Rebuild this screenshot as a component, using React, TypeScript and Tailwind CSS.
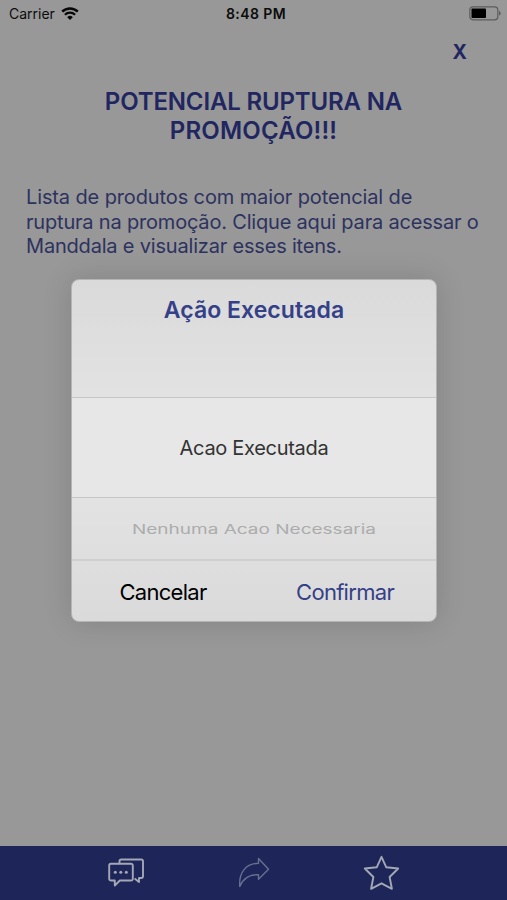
import React, { useState } from "react";

const WifiIcon = () => (
  <svg width="18" height="14" viewBox="0 0 18 14" fill="none">
    <path d="M1.2 4.7a11 11 0 0 1 15.6 0" stroke="#080808" strokeWidth="2.5" />
    <path d="M3.9 7.7a7.200 7.200 0 0 1 10.200 0" stroke="#080808" strokeWidth="2.200" />
    <path d="M9 13 6.200 10.200a4 4 0 0 1 5.600 0Z" fill="#080808" />
  </svg>
);

const BatteryIcon = () => (
  <svg width="33" height="15" viewBox="0 0 33 15" fill="none">
    <rect x="0.8" y="0.8" width="28" height="13" rx="3" stroke="#5c5c5c" strokeWidth="1.2" />
    <rect x="2.500" y="2.500" width="14.500" height="9.600" rx="0.8" fill="#000" />
    <path d="M30 5v4.600c1-.4 1.700-1.200 1.700-2.300S31 5.400 30 5Z" fill="#5c5c5c" />
  </svg>
);

const ChatIcon = () => (
  <svg width="37" height="30" viewBox="0 0 37 30" fill="none" stroke="#a3a8b5" strokeWidth="1.900" strokeLinejoin="round">
    <path d="M11.500 5.200V3.200a1.700 1.700 0 0 1 1.700-1.700H33.300a1.700 1.700 0 0 1 1.700 1.700V18.300a1.700 1.700 0 0 1-1.700 1.700H31v4l-4.400-3.400" />
    <path d="M3 5.700H23a1.800 1.800 0 0 1 1.800 1.800V20.700a1.800 1.800 0 0 1-1.800 1.800H11.800L6.800 27.600V22.500H3a1.800 1.800 0 0 1-1.800-1.800V7.500A1.800 1.800 0 0 1 3 5.700Z" />
    <g fill="#a3a8b5" stroke="none">
      <circle cx="7.300" cy="14.200" r="1.500" />
      <circle cx="12.800" cy="14.200" r="1.500" />
      <circle cx="18.300" cy="14.200" r="1.500" />
    </g>
  </svg>
);

const ShareIcon = () => (
  <svg width="32" height="32" viewBox="0 0 32 32" fill="none" stroke="#687091" strokeWidth="1.400" strokeLinejoin="round">
    <path d="M20.500 1.500 30.500 12.200 20.500 22.300V17.800C12 17.200 5 21.500 1.800 29.500C.6 16 7.500 6.300 20.500 6.300Z" />
  </svg>
);

const StarIcon = () => (
  <svg width="37" height="36" viewBox="0 0 37 36" fill="none" stroke="#a3a8b5" strokeWidth="1.900" strokeLinejoin="round">
    <path d="M18.500 1.800 23.300 12.300 35.200 13.500 26.600 22 28.900 33.800 18.500 28.300 8.100 33.800 10.400 22 1.800 13.500 13.700 12.300Z" />
  </svg>
);

const StatusBar = () => (
  <header className="grid h-[27px] grid-cols-3 items-center pl-[9px] pr-[5px] text-[14px] leading-[27px] text-[#0c0c0c]">
    <div className="flex items-center gap-[6px]">
      <span>Carrier</span>
      <WifiIcon />
    </div>
    <span className="pl-px text-center font-semibold tracking-[0.4px]">8:48 PM</span>
    <div className="flex justify-end">
      <BatteryIcon />
    </div>
  </header>
);

const TabBar = () => (
  <footer className="flex h-[54px] shrink-0 items-center justify-between bg-[#1e2559] pl-[108px] pr-[107px]">
    <button>
      <ChatIcon />
    </button>
    <button>
      <ShareIcon />
    </button>
    <button>
      <StarIcon />
    </button>
  </footer>
);

interface ActionModalProps {
  onClose: () => void;
}

const ActionModal = ({ onClose }: ActionModalProps) => (
  <div className="absolute left-[71px] top-[279px] flex h-[343px] w-[366px] flex-col overflow-hidden rounded-[8px] border border-[#b4b4b4] bg-linear-to-b from-[#dadada] via-[#e6e6e6] to-[#dadada] text-center shadow-[0_0_30px_rgba(0,0,0,0.14)]">
    <div className="h-[118px] border-b border-[#c6c6c6] pt-[15px]">
      <h2 className="text-[23px] font-semibold leading-[30px] tracking-[0.05px] text-[#344087]">Ação Executada</h2>
    </div>
    <div className="flex h-[100px] items-center justify-center border-b border-[#c6c6c6] bg-[#e7e7e7]">
      <p className="text-[20px] tracking-[-0.3px] text-[#333333]">Acao Executada</p>
    </div>
    <div className="flex h-[63px] items-center justify-center border-b-2 border-[#cfcfcf] pt-[4px]">
      <p className="origin-center scale-y-[0.68] whitespace-nowrap text-[19px] text-[#acacac]">Nenhuma Acao Necessaria</p>
    </div>
    <div className="grid flex-1 grid-cols-2 items-center pt-[2px] text-[22px] tracking-[-0.7px]">
      <button onClick={onClose} className="text-black">
        Cancelar
      </button>
      <button onClick={onClose} className="text-[#344087]">
        Confirmar
      </button>
    </div>
  </div>
);

const App = () => {
  const [isModalOpen, setIsModalOpen] = useState<boolean>(true);

  return (
    <div className="relative flex h-[900px] w-[507px] flex-col overflow-hidden bg-[#989898] font-['Inter','Liberation_Sans',sans-serif]">
      <StatusBar />
      <main className="flex-1">
        <div className="flex justify-end pr-[40px] pt-[10px]">
          <button className="text-[19.500px] font-bold leading-[30px] text-[#212661]">X</button>
        </div>
        <h1 className="mt-[20px] text-center text-[24px] font-semibold leading-[29px] text-[#212661]">
          <span className="tracking-[-0.15px]">POTENCIAL RUPTURA NA</span>
          <br />
          <span className="tracking-[0.2px]">PROMOÇÃO!!!</span>
        </h1>
        <p className="mt-[40px] whitespace-nowrap pl-[26px] text-[20px] leading-[24.500px] tracking-[-0.19px] text-[#2d325f]">
          <span className="tracking-[-0.12px]">Lista de produtos com maior potencial de</span>
          <br />
          ruptura na promoção. Clique aqui para acessar o
          <br />
          Manddala e visualizar esses itens.
        </p>
      </main>
      <TabBar />
      {isModalOpen && <ActionModal onClose={() => setIsModalOpen(false)} />}
    </div>
  );
};

export default App;
